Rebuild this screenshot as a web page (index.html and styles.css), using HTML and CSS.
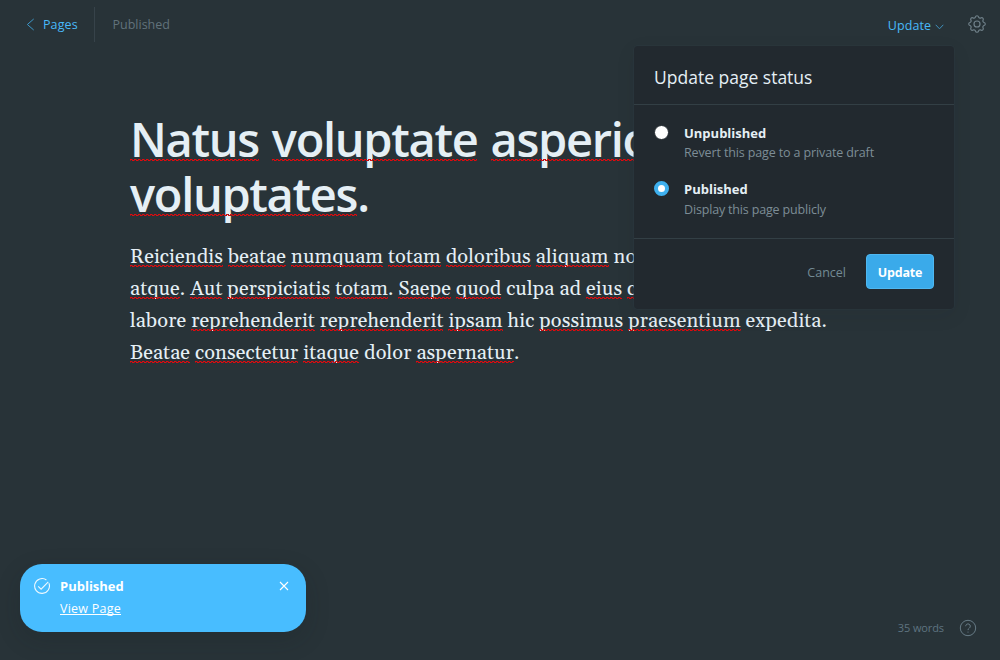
FILE: index.html
```html
<!DOCTYPE html>
<html lang="en">
<head>
<meta charset="utf-8">
<title>Page editor</title>
<link rel="stylesheet" href="styles.css">
</head>
<body>
<div class="app">
  <header class="topbar">
    <nav class="crumbs">
      <a class="back" href="#"><svg width="9" height="13" viewBox="0 0 9 13"><path d="M7.7 1 L1.4 6.5 L7.7 12"/></svg><span>Pages</span></a>
      <span class="state">Published</span>
    </nav>
    <div class="actions">
      <a class="update" href="#">Update<svg width="9" height="6" viewBox="0 0 9 6"><path d="M.7 .8 L4.5 4.8 L8.3 .8"/></svg></a>
      <svg class="gear" width="18" height="18" viewBox="2.2 2.2 19.6 19.6"><path d="M10.325 4.317c.426-1.756 2.924-1.756 3.35 0a1.724 1.724 0 002.573 1.066c1.543-.94 3.31.826 2.37 2.37a1.724 1.724 0 001.065 2.572c1.756.426 1.756 2.924 0 3.35a1.724 1.724 0 00-1.066 2.573c.94 1.543-.826 3.31-2.37 2.37a1.724 1.724 0 00-2.572 1.065c-.426 1.756-2.924 1.756-3.35 0a1.724 1.724 0 00-2.573-1.066c-1.543.94-3.31-.826-2.37-2.37a1.724 1.724 0 00-1.065-2.572c-1.756-.426-1.756-2.924 0-3.35a1.724 1.724 0 001.066-2.573c-.94-1.543.826-3.31 2.37-2.37.996.608 2.296.07 2.572-1.065z"/><circle cx="12" cy="12" r="3.3"/></svg>
    </div>
  </header>
  <main class="editor">
    <h1><i>Natus</i> <i>voluptate</i> <i>asperiores</i><br><i>voluptates</i>.</h1>
    <p><i>Reiciendis</i> <i>beatae</i> <i>numquam</i> <i>totam</i> <i>doloribus</i> <i>aliquam</i> non<br>
    <i>atque</i>. <i>Aut</i> <i>perspiciatis</i> <i>totam</i>. <i>Saepe</i> <i>quod</i> culpa ad <i>eius</i> <i>corporis</i><br>
    labore <i>reprehenderit</i> <i>reprehenderit</i> <i>ipsam</i> hic <i>possimus</i> <i>praesentium</i> expedita.<br>
    <i>Beatae</i> <i>consectetur</i> <i>itaque</i> dolor <i>aspernatur</i>.</p>
  </main>
  <footer class="status">
    <span>35 words</span>
    <svg class="help" width="18" height="18" viewBox="0 0 18 18"><circle cx="9" cy="9" r="7.7"/><path d="M6.7 7.2 a2.3 2.3 0 1 1 3.6 1.9 q-1.3 .8 -1.3 2"/><path d="M9 12.6 v1"/></svg>
  </footer>
</div>

<section class="popover">
  <h2>Update page status</h2>
  <div class="options">
    <label class="option"><span class="radio"></span><span class="text"><b>Unpublished</b><small class="revert">Revert this page to a private draft</small></span></label>
    <label class="option"><span class="radio on"></span><span class="text"><b>Published</b><small class="display">Display this page publicly</small></span></label>
  </div>
  <div class="buttons"><a class="cancel" href="#">Cancel</a><button>Update</button></div>
</section>

<aside class="toast">
  <svg class="check" width="16" height="16" viewBox="0 0 16 16"><path d="M14.9 5.2 A7.4 7.4 0 1 1 12.4 2"/><path d="M4.2 8.3 L7.1 11.2 L14.3 3.8"/></svg>
  <div class="message"><b>Published</b><a href="#">View Page</a></div>
  <svg class="close" width="10" height="10" viewBox="0 0 10 10"><path d="M1 1 L9 9 M9 1 L1 9"/></svg>
</aside>
</body>
</html>
```
FILE: styles.css
```css
* { box-sizing: border-box; }
body {
  margin: 0;
  background: #283338;
  font: 12.5px/20px "Open Sans", "Noto Sans", sans-serif;
  overflow: hidden;
}
a { text-decoration: none; color: inherit; }
svg { fill: none; stroke: currentColor; flex: none; }
.app { height: 660px; display: flex; flex-direction: column; }

.topbar { height: 48px; display: flex; justify-content: space-between; padding: 0 14px 0 26px; }
.crumbs, .actions, .back { display: flex; align-items: center; }
.back {
  height: 35px; width: 69px; gap: 8px;
  color: #48b9f8; border-right: 1px solid #37434a;
}
.back svg { stroke: #3d97c9; }
.back span { padding-top: 2px; font-weight: 500; letter-spacing: .1px; }
.state { margin-left: 17.5px; padding-top: 2px; color: #61727b; }
.update { display: flex; align-items: center; gap: 4px; margin: 3px 24px 0 0; color: #48b9f8; letter-spacing: .05px; }
.update svg { stroke: #3f8fba; margin-top: 2px; }
.gear { color: #71828b; stroke-width: 1.25; }

.editor { flex: 1; padding: 64px 130px 0; color: #e5eff5; white-space: nowrap; }
h1 { margin: 0; font-size: 47px; line-height: 55px; font-weight: 600; letter-spacing: -1.33px; word-spacing: 2.2px; }
p { margin: 19px 0 0; font: 20px/32px Gelasio, Georgia, "Liberation Serif", serif; letter-spacing: .1px; }
i { font-style: normal; position: relative; }
/* spell-check squiggle, drawn over the descenders */
i::after {
  content: ""; position: absolute; left: 0; right: 0; height: 2px; bottom: 3px;
  background:
    repeating-linear-gradient(90deg, #e00b0f 0 2px, #8e1a1e 2px 3px, transparent 3px 4px) 0 0 / 100% 1px no-repeat,
    repeating-linear-gradient(90deg, #8e1a1e 0 1px, transparent 1px 2px, #e00b0f 2px 4px) 0 1px / 100% 1px no-repeat;
}
h1 i::after { bottom: 10px; }

.status {
  height: 64px; display: flex; justify-content: flex-end; align-items: center; gap: 15px;
  padding-right: 23px; color: #5f7480; font-size: 11px; letter-spacing: -.1px;
}
.help { color: #667a85; }

.popover {
  position: absolute; left: 634px; top: 46px; width: 320px; height: 263px;
  background: #22292f; border-radius: 4px; color: #e5eff5;
  box-shadow: 0 0 0 1px rgba(45, 58, 64, .45), 0 6px 20px rgba(20, 28, 33, .08);
}
h2 { margin: 0; height: 59px; padding: 19px 20px 0; border-bottom: 1px solid #333f45; font-size: 17.5px; line-height: 24px; font-weight: 400; }
.options { height: 134px; padding: 18px 20px 0; border-bottom: 1px solid #333f45; display: flex; flex-direction: column; gap: 16px; }
.option { display: flex; gap: 15px; }
.radio { width: 15px; height: 15px; margin-top: 2px; border-radius: 50%; background: #fff; border: 1px solid #22292f; }
.radio.on { border: 4px solid #3eb0ef; }
.text { display: flex; flex-direction: column; }
.text b { font-size: 13px; }
small { font-size: 12.5px; color: #7d8d96; }
.revert { letter-spacing: -.13px; }
.display { letter-spacing: -.17px; padding-top: 1px; }
.buttons { display: flex; justify-content: flex-end; align-items: center; gap: 20px; padding: 15px 20px 0; }
.cancel { color: #738a94; padding-top: 2px; }
button {
  width: 68px; height: 35px; padding: 2px 0 0; border: 1px solid #4fb7f0; border-radius: 4px;
  background: #3aaaea; color: #fff; font: 700 12.5px "Open Sans", sans-serif; letter-spacing: -.2px;
}

.toast {
  position: absolute; left: 20px; top: 564px; width: 286px; height: 68px;
  display: flex; align-items: flex-start; gap: 10px; padding: 12px 17px 0 14px;
  background: #48bdff; border-radius: 22px; color: #fff;
  box-shadow: 0 8px 24px rgba(20, 28, 33, .2);
}
.check { margin-top: 2px; stroke-width: 1.1; opacity: .9; }
.message { flex: 1; display: flex; flex-direction: column; align-items: flex-start; gap: 3px; }
.message b { font-size: 13px; }
.message a { text-decoration: underline; text-underline-offset: 1px; text-decoration-skip-ink: none; letter-spacing: .24px; }
.close { margin-top: 5px; stroke-width: 1.1; }
```
